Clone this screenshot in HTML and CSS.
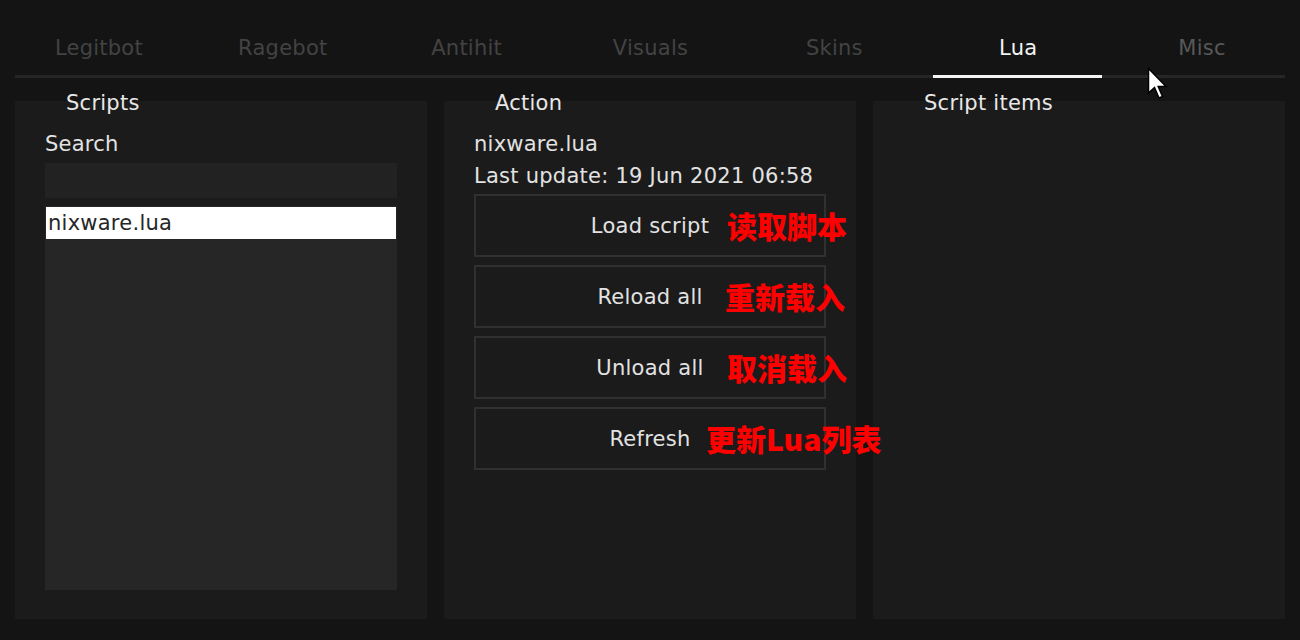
FILE: index.html
```html
<!DOCTYPE html>
<html>
<head>
<meta charset="utf-8">
<link rel="stylesheet" href="styles.css">
</head>
<body>
<div class="app">
  <nav class="tabs">
    <div class="tab">Legitbot</div>
    <div class="tab">Ragebot</div>
    <div class="tab">Antihit</div>
    <div class="tab">Visuals</div>
    <div class="tab">Skins</div>
    <div class="tab active">Lua</div>
    <div class="tab hover">Misc</div>
  </nav>
  <div class="divider"></div>
  <main class="panels">
    <section class="panel">
      <h2 class="panel-title">Scripts</h2>
      <div class="label">Search</div>
      <div class="search"></div>
      <ul class="list">
        <li class="item selected">nixware.lua</li>
      </ul>
    </section>
    <section class="panel">
      <h2 class="panel-title">Action</h2>
      <div class="info">nixware.lua</div>
      <div class="info">Last update: 19 Jun 2021 06:58</div>
      <div class="buttons">
        <div class="btn">Load script<span class="note note-load">读取脚本</span></div>
        <div class="btn">Reload all<span class="note note-reload">重新载入</span></div>
        <div class="btn">Unload all<span class="note note-unload">取消载入</span></div>
        <div class="btn">Refresh<span class="note note-refresh">更新Lua列表</span></div>
      </div>
    </section>
    <section class="panel">
      <h2 class="panel-title">Script items</h2>
    </section>
  </main>
  <svg class="cursor" width="22" height="34" viewBox="0 0 22 34">
    <path d="M1.5 1.5 L1.5 26 L7.5 20.5 L12 31 L15.5 29.5 L11.2 19.5 L19 19.5 Z" fill="#fff" stroke="#000" stroke-width="1.5" stroke-linejoin="miter"/>
  </svg>
</div>
</body>
</html>
```
FILE: styles.css
```css
* { box-sizing: border-box; }
html, body {
  margin: 0;
  padding: 0;
  background: #141414;
}
body {
  font-family: "DejaVu Sans", Verdana, sans-serif;
  font-size: 21px;
  letter-spacing: 0.25px;
  color: #e2e2e2;
  width: 1300px;
  height: 640px;
  overflow: hidden;
}
.app {
  position: relative;
  width: 1300px;
  height: 640px;
}
.tabs {
  display: flex;
  padding-left: 7px;
  width: 1294px;
  height: 75px;
}
.tab {
  position: relative;
  flex: 1;
  text-align: center;
  padding-top: 35px;
  line-height: 26px;
  color: #434343;
}
.tab.hover { color: #585858; }
.tab.active { color: #f2f2f2; }
.tab.active::after {
  content: "";
  position: absolute;
  left: 7px;
  right: 8px;
  bottom: -3px;
  height: 3px;
  background: #f4f4f4;
  z-index: 2;
}
.divider {
  margin: 0 15px;
  height: 3px;
  background: #262626;
}
.panels {
  display: flex;
  gap: 17px;
  padding: 23px 15px 0;
}
.panel {
  width: 412px;
  height: 518px;
  background: #1b1b1b;
  padding: 0 30px 29px;
  display: flex;
  flex-direction: column;
}
.panel-title {
  margin: -10px 0 0 21px;
  font-size: 21px;
  font-weight: normal;
  line-height: 24px;
  color: #e8e8e8;
}
.label {
  margin-top: 17px;
  line-height: 24px;
}
.search {
  margin-top: 7px;
  height: 35px;
  width: 352px;
  background: #222222;
}
.list {
  list-style: none;
  margin: 8px 0 0;
  padding: 1px;
  width: 352px;
  flex: 1;
  background: #262626;
}
.item {
  height: 32px;
  line-height: 32px;
  padding-left: 2px;
  color: #262626;
}
.item.selected { background: #ffffff; }
.info {
  line-height: 24px;
  height: 32px;
}
.info:first-of-type { margin-top: 17px; }
.buttons {
  margin-top: -2px;
  display: flex;
  flex-direction: column;
  gap: 8px;
  width: 352px;
}
.btn {
  position: relative;
  height: 63px;
  border: 2px solid #303030;
  display: flex;
  align-items: center;
  justify-content: center;
}
.note {
  position: absolute;
  top: 50%;
  transform: translateY(-52%);
  font-family: "Noto Sans CJK SC", sans-serif;
  font-weight: 900;
  font-size: 30px;
  line-height: 36px;
  letter-spacing: 0;
  color: #ff0000;
  white-space: nowrap;
}
.note-load { left: 251px; }
.note-reload { left: 249px; }
.note-unload { left: 251px; }
.note-refresh { left: 230px; }
.cursor {
  position: absolute;
  left: 1147px;
  top: 67px;
}
```
